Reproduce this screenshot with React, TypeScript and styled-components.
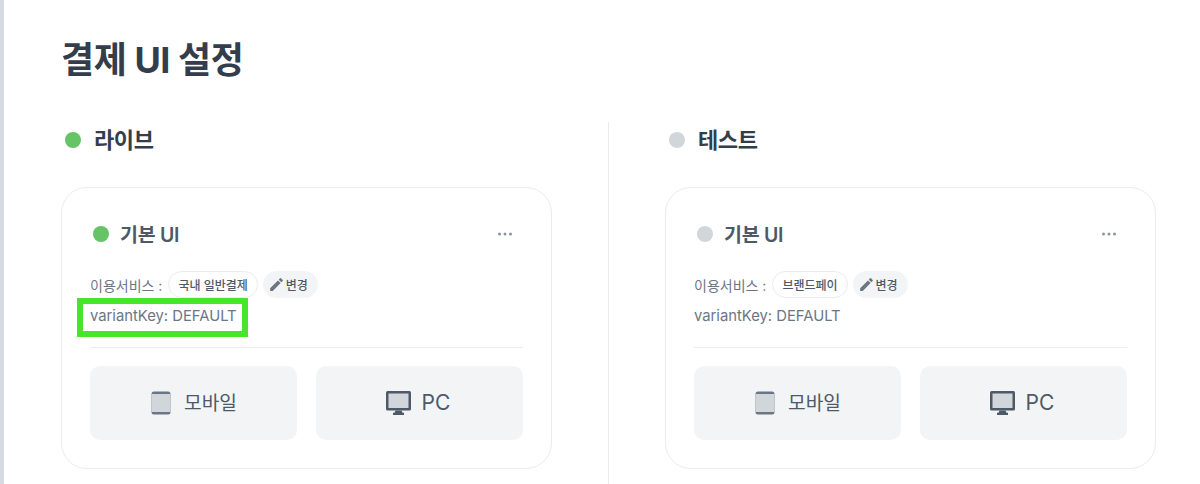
import React from "react";
import styled, { createGlobalStyle } from "styled-components";

const Global = createGlobalStyle`
  html, body { margin: 0; padding: 0; background: #fff; }
  body { font-family: Inter, "Noto Sans CJK KR", sans-serif; overflow: hidden; }
`;

const Page = styled.div`
  width: 1200px;
  height: 484px;
  box-sizing: border-box;
  border-left: 4px solid #d5dae3;
  padding: 36px 0 0 57px;
  overflow: hidden;
`;

const Title = styled.h1`
  margin: 0;
  height: 48px;
  font-size: 36px;
  line-height: 48px;
  font-weight: 700;
  color: #333d4b;
  letter-spacing: -0.45px;
`;

const Columns = styled.div`
  display: flex;
  margin-top: 38px;
`;

const Column = styled.section`
  width: 491px;
`;

const Separator = styled.div`
  width: 1px;
  height: 362px;
  background: #e9ebee;
  margin: 0 56px;
`;

const SectionHead = styled.div`
  display: flex;
  align-items: center;
  gap: 13px;
  height: 36px;
  padding-left: 4px;
  margin-bottom: 29px;
`;

const Dot = styled.span<{ $live: boolean }>`
  width: 16px;
  height: 16px;
  border-radius: 50%;
  flex: none;
  background: ${(p) => (p.$live ? "#65c466" : "#d1d6db")};
`;

const SectionName = styled.h2`
  margin: 0 0 5px;
  font-size: 22px;
  font-weight: 700;
  color: #333d4b;
  letter-spacing: -0.4px;
`;

const Card = styled.article`
  box-sizing: border-box;
  height: 282px;
  border: 1px solid #eaecef;
  border-radius: 26px;
  padding: 29px 28px;
`;

const CardHead = styled.div`
  display: flex;
  align-items: center;
  justify-content: space-between;
  height: 34px;
  padding-left: 3px;
`;

const CardTitle = styled.div`
  display: flex;
  align-items: center;
  gap: 11px;
  font-size: 19.5px;
  font-weight: 600;
  color: #4e5968;
  letter-spacing: -0.3px;
`;

const CardLabel = styled.span`
  margin-bottom: 2px;
`;

const More = styled.svg`
  width: 16px;
  height: 4px;
  margin-right: 10px;
  fill: #8b95a1;
`;

const ServiceRow = styled.div`
  display: flex;
  align-items: center;
  margin-top: 20px;
  height: 27px;
  font-size: 14px;
  color: #6b7684;
`;

const ServiceChip = styled.span`
  box-sizing: border-box;
  height: 27px;
  display: inline-flex;
  align-items: center;
  padding: 0 9px;
  margin-left: 6px;
  border: 1px solid #e9ebee;
  border-radius: 14px;
  font-size: 12px;
  font-weight: 500;
  color: #4e5968;
`;

const ChangeChip = styled.span`
  height: 27px;
  display: inline-flex;
  align-items: center;
  gap: 1px;
  padding: 0 10px 0 5px;
  margin-left: 5px;
  border-radius: 14px;
  background: #f2f4f6;
  font-size: 12px;
  font-weight: 500;
  color: #4e5968;
`;

const PenIcon = styled.svg`
  width: 17px;
  height: 17px;
  fill: #6b7684;
`;

const VariantRow = styled.div`
  margin-top: 6px;
  height: 24px;
  line-height: 24px;
  font-size: 14.8px;
  color: #6b7684;
`;

const VariantText = styled.span<{ $marked: boolean }>`
  position: relative;
  display: inline-block;
  &::after {
    content: "";
    display: ${(p) => (p.$marked ? "block" : "none")};
    position: absolute;
    left: -13px;
    top: -6px;
    right: -11px;
    bottom: -9px;
    border: 6px solid #47e62c;
  }
`;

const Rule = styled.hr`
  margin: 19px 0 18px;
  border: 0;
  height: 1px;
  background: #eaecef;
`;

const Buttons = styled.div`
  display: grid;
  grid-template-columns: 207px 207px;
  gap: 19px;
`;

const DeviceButton = styled.button<{ $gap: number; $inset: string }>`
  height: 74px;
  border: 0;
  border-radius: 10px;
  background: #f2f4f6;
  display: flex;
  align-items: center;
  justify-content: center;
  gap: ${(p) => p.$gap}px;
  padding: ${(p) => p.$inset};
  font-family: inherit;
  font-weight: 400;
  color: #4e5968;
`;

const DeviceLabel = styled.span<{ $size: number }>`
  font-size: ${(p) => p.$size}px;
  margin-bottom: 2px;
`;

const DeviceIcon = styled.svg<{ $w: number }>`
  width: ${(p) => p.$w}px;
  height: 26px;
  flex: none;
`;

const Phone = () => (
  <DeviceIcon $w={20} viewBox="0 0 20 26">
    <rect x="0.5" y="1.5" width="19" height="23" rx="2.5" fill="#6b7684" />
    <rect x="0.5" y="4" width="19" height="18" fill="#d1d6db" />
  </DeviceIcon>
);

const Monitor = () => (
  <DeviceIcon $w={25} viewBox="0 0 25 26">
    <rect x="0" y="1" width="25" height="19.5" rx="1.5" fill="#4e5968" />
    <rect x="2.5" y="3.5" width="20" height="14.5" fill="#d1d6db" />
    <path d="M9.5 20.5h6l1 2.2h1.5V25H7v-2.3h1.5z" fill="#4e5968" />
  </DeviceIcon>
);

type Env = { name: string; live: boolean; service: string; marked: boolean };

const envs: Env[] = [
  { name: "라이브", live: true, service: "국내 일반결제", marked: true },
  { name: "테스트", live: false, service: "브랜드페이", marked: false },
];

const EnvColumn = ({ env }: { env: Env }) => (
  <Column>
    <SectionHead>
      <Dot $live={env.live} />
      <SectionName>{env.name}</SectionName>
    </SectionHead>
    <Card>
      <CardHead>
        <CardTitle>
          <Dot $live={env.live} />
          <CardLabel>기본 UI</CardLabel>
        </CardTitle>
        <More viewBox="0 0 16 4">
          <circle cx="2.5" cy="2" r="1.5" />
          <circle cx="8" cy="2" r="1.5" />
          <circle cx="13.5" cy="2" r="1.5" />
        </More>
      </CardHead>
      <ServiceRow>
        이용서비스 :
        <ServiceChip>{env.service}</ServiceChip>
        <ChangeChip>
          <PenIcon viewBox="0 0 24 24">
            <path d="M3 17.25V21h3.75L17.81 9.94l-3.75-3.75L3 17.25zM20.71 7.04a1 1 0 0 0 0-1.41l-2.34-2.34a1 1 0 0 0-1.41 0l-1.83 1.83 3.75 3.75 1.83-1.83z" />
          </PenIcon>
          변경
        </ChangeChip>
      </ServiceRow>
      <VariantRow>
        <VariantText $marked={env.marked}>variantKey: DEFAULT</VariantText>
      </VariantRow>
      <Rule />
      <Buttons>
        <DeviceButton $gap={13} $inset="0 0 0 1px">
          <Phone />
          <DeviceLabel $size={19.2}>모바일</DeviceLabel>
        </DeviceButton>
        <DeviceButton $gap={11} $inset="0 3px 0 0">
          <Monitor />
          <DeviceLabel $size={21}>PC</DeviceLabel>
        </DeviceButton>
      </Buttons>
    </Card>
  </Column>
);

export default function App() {
  return (
    <>
      <Global />
      <Page>
        <Title>결제 UI 설정</Title>
        <Columns>
          <EnvColumn env={envs[0]} />
          <Separator />
          <EnvColumn env={envs[1]} />
        </Columns>
      </Page>
    </>
  );
}
